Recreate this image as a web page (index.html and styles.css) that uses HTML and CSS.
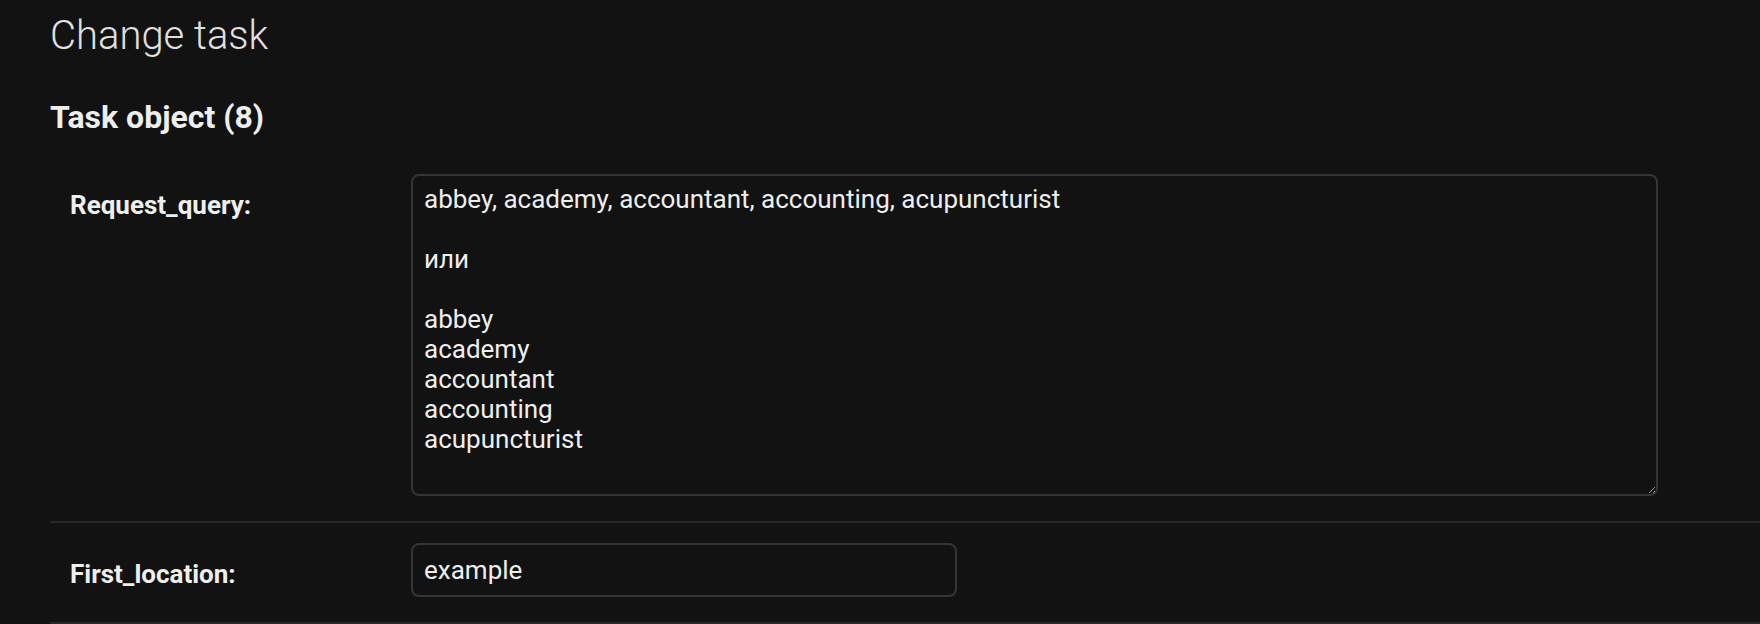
FILE: index.html
```html
<!DOCTYPE html>
<html lang="en">
<head>
<meta charset="utf-8">
<title>Change task</title>
<link rel="stylesheet" href="styles.css">
</head>
<body>
<div class="content">
  <h1 class="title">Change task</h1>
  <h2 class="subtitle">Task object (8)</h2>
  <form class="change-form">
    <fieldset class="module aligned">
      <div class="form-row">
        <div class="field">
          <label class="required" for="id_request_query">Request_query:</label>
          <textarea id="id_request_query" class="large-text">abbey, academy, accountant, accounting, acupuncturist

или

abbey
academy
accountant
accounting
acupuncturist</textarea>
        </div>
      </div>
      <div class="form-row">
        <div class="field">
          <label class="required" for="id_first_location">First_location:</label>
          <input id="id_first_location" class="text-input" type="text" value="example">
        </div>
      </div>
    </fieldset>
  </form>
</div>
</body>
</html>
```

FILE: styles.css
```css
:root {
  color-scheme: dark;
}

html, body {
  margin: 0;
  padding: 0;
  background: #121212;
  color: #eeeeee;
  font-family: Roboto, "Noto Sans", "Liberation Sans", sans-serif;
}

.content {
  padding: 12px 0 0 50px;
}

.title {
  margin: 0 0 39px;
  font-size: 40px;
  font-weight: 300;
  line-height: normal;
  color: #e0e0e0;
}

.subtitle {
  margin: 0 0 18px;
  font-size: 32px;
  font-weight: 700;
  line-height: normal;
  color: #eeeeee;
}

.change-form {
  margin: 0;
}

.module {
  margin: 0;
  padding: 0;
  border: none;
  min-width: 0;
}

.form-row {
  padding: 20px 20px 25px;
  border-bottom: 2px solid #272727;
  font-size: 26px;
}

.field {
  display: flex;
  align-items: flex-start;
}

.field label {
  box-sizing: border-box;
  flex: 0 0 341px;
  width: 341px;
  padding: 16px 20px 0 0;
  font-size: 26px;
  line-height: 30px;
  color: #eeeeee;
}

.field label.required {
  font-weight: 700;
}

.large-text,
.text-input {
  box-sizing: border-box;
  margin: 0;
  font-family: Roboto, "Noto Sans", "Liberation Sans", sans-serif;
  font-size: 26px;
  line-height: normal;
  color: #eeeeee;
  background: #121212;
  border: 2px solid #353535;
  border-radius: 8px;
  outline: none;
}

.large-text {
  width: 1247px;
  height: 322px;
  padding: 8px 11px;
  resize: both;
  overflow: auto;
}

.text-input {
  width: 546px;
  height: 54px;
  padding: 9px 11px;
}
```
